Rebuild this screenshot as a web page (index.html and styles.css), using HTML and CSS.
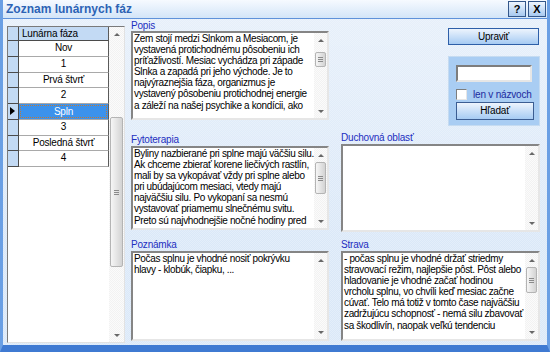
FILE: index.html
```html
<!DOCTYPE html>
<html lang="sk">
<head>
  <meta charset="UTF-8">
  <title>Zoznam lunárnych fáz</title>
  <link rel="stylesheet" href="styles.css">
</head>
<body>
  <div class="window">
    <div class="titlebar">
      <span class="title">Zoznam lunárnych fáz</span>
      <div class="title-buttons">
        <span class="tbtn">?</span>
        <span class="tbtn">X</span>
      </div>
    </div>

    <div class="content">
      <!-- grid with phases -->
      <div class="grid">
        <div class="grid-body">
          <div class="grow head"><span class="rh"></span><span class="cell hcell">Lunárna fáza</span></div>
          <div class="grow"><span class="rh"></span><span class="cell">Nov</span></div>
          <div class="grow"><span class="rh"></span><span class="cell">1</span></div>
          <div class="grow"><span class="rh"></span><span class="cell">Prvá štvrť</span></div>
          <div class="grow"><span class="rh"></span><span class="cell">2</span></div>
          <div class="grow current"><span class="rh"></span><span class="cell"><span class="focus">Spln</span></span></div>
          <div class="grow"><span class="rh"></span><span class="cell">3</span></div>
          <div class="grow"><span class="rh"></span><span class="cell">Posledná štvrť</span></div>
          <div class="grow"><span class="rh"></span><span class="cell">4</span></div>
        </div>
        <div class="vscroll wide">
          <span class="sb-btn sb-up"></span>
          <div class="sb-track"><div class="thumb thumb-grid"></div></div>
          <span class="sb-btn sb-down"></span>
        </div>
      </div>

      <div class="col col-mid">
        <div class="label label-top">Popis</div>
        <div class="memo memo-popis">
          <div class="memo-text">Zem stojí medzi Slnkom a Mesiacom, je<br>vystavená protichodnému pôsobeniu ich<br>príťažlivostí. Mesiac vychádza pri západe<br>Slnka a zapadá pri jeho východe. Je to<br>najvýraznejšia fáza, organizmus je<br>vystavený pôsobeniu protichodnej energie<br>a záleží na našej psychike a kondícii, ako</div>
          <div class="vscroll">
            <span class="sb-btn sb-up"></span>
            <div class="sb-track"><div class="thumb thumb-popis"></div></div>
            <span class="sb-btn sb-down"></span>
          </div>
        </div>

        <div class="label label-gap">Fytoterapia</div>
        <div class="memo memo-fyto">
          <div class="memo-text">Byliny nazbierané pri splne majú väčšiu silu.<br>Ak chceme zbierať korene liečivých rastlín,<br>mali by sa vykopávať vždy pri splne alebo<br>pri ubúdajúcom mesiaci, vtedy majú<br>najväčšiu silu. Po vykopaní sa nesmú<br>vystavovať priamemu slnečnému svitu.<br>Preto sú najvhodnejšie nočné hodiny pred</div>
          <div class="vscroll">
            <span class="sb-btn sb-up"></span>
            <div class="sb-track"><div class="thumb thumb-fyto"></div></div>
            <span class="sb-btn sb-down"></span>
          </div>
        </div>

        <div class="label label-gap2">Poznámka</div>
        <div class="memo memo-low">
          <div class="memo-text">Počas splnu je vhodné nosiť pokrývku<br>hlavy - klobúk, čiapku, ...</div>
          <div class="vscroll">
            <span class="sb-btn sb-up"></span>
            <div class="sb-track"></div>
            <span class="sb-btn sb-down"></span>
          </div>
        </div>
      </div>

      <div class="col col-right">
        <div class="tools">
          <div class="btn btn-edit">Upraviť</div>
          <div class="search">
            <div class="input"></div>
            <div class="check-row"><span class="checkbox"></span><span class="check-label">len v názvoch</span></div>
            <div class="btn btn-find">Hľadať</div>
          </div>
        </div>

        <div class="label">Duchovná oblasť</div>
        <div class="memo memo-duch">
          <div class="memo-text"></div>
          <div class="vscroll">
            <span class="sb-btn sb-up"></span>
            <div class="sb-track"></div>
            <span class="sb-btn sb-down"></span>
          </div>
        </div>

        <div class="label label-gap3">Strava</div>
        <div class="memo memo-low">
          <div class="memo-text">- počas splnu je vhodné držať striedmy<br>stravovací režim, najlepšie pôst. Pôst alebo<br>hladovanie je vhodné začať hodinou<br>vrcholu splnu, vo chvíli keď mesiac začne<br>cúvať. Telo má totiž v tomto čase najväčšiu<br>zadržujúcu schopnosť - nemá silu zbavovať<br>sa škodlivín, naopak veľkú tendenciu</div>
          <div class="vscroll">
            <span class="sb-btn sb-up"></span>
            <div class="sb-track"><div class="thumb thumb-strava"></div></div>
            <span class="sb-btn sb-down"></span>
          </div>
        </div>
      </div>
    </div>
  </div>
</body>
</html>
```

FILE: styles.css
```css
body {
  margin: 0;
  font-family: "Liberation Sans", Arial, sans-serif;
  font-size: 10px;
  letter-spacing: -0.2px;
  color: #000;
}
.window {
  width: 550px;
  height: 352px;
  box-sizing: border-box;
  border-left: 3px solid #6a9fe4;
  border-right: 3px solid #6a9fe4;
  border-bottom: 7px solid #3f7ad2;
  display: flex;
  flex-direction: column;
  background-color: #dae8f8;
  background-image: linear-gradient(rgba(255,255,255,0.35), rgba(255,255,255,0) 70%),
    repeating-conic-gradient(rgba(255,255,255,0.28) 0 25%, transparent 0 50%);
  background-size: 100% 100%, 2px 2px;
}

/* title bar */
.titlebar {
  height: 18px;
  border-bottom: 1px solid #5f92da;
  background: linear-gradient(#f6faff, #d3e5f8);
  display: flex;
  align-items: center;
  justify-content: space-between;
}
.title {
  margin-left: 3px;
  font-size: 12px;
  font-weight: bold;
  letter-spacing: 0;
  color: #2c63b5;
}
.title-buttons {
  display: flex;
  gap: 2px;
  margin-right: 1px;
}
.tbtn {
  width: 16px;
  height: 14px;
  border: 1px solid #34578a;
  background: linear-gradient(#eef5fe, #a7c9f0);
  font-size: 11px;
  font-weight: bold;
  line-height: 14px;
  text-align: center;
  letter-spacing: 0;
}

/* layout */
.content {
  flex: 1;
  display: flex;
  padding-left: 4px;
}
.col {
  display: flex;
  flex-direction: column;
}
.col-mid {
  width: 198px;
  margin-left: 6px;
}
.col-right {
  width: 199px;
  margin-left: 12px;
}
.label {
  height: 13px;
  line-height: 13px;
  color: #1d2ec0;
}
.label-top {
  height: 10px;
  padding-top: 2px;
  line-height: 10px;
}
.label-gap {
  margin-top: 13px;
}
.label-gap2 {
  margin-top: 8px;
}
.label-gap3 {
  margin-top: 6px;
}

/* grid */
.grid {
  width: 118px;
  height: 317px;
  margin-top: 7px;
  box-sizing: border-box;
  border: 1px solid;
  border-color: #7a7a7a #e2e2e2 #e2e2e2 #7a7a7a;
  background: #fff;
  display: flex;
}
.grid-body {
  flex: 1;
}
.grow {
  display: flex;
  height: 15.75px;
  box-sizing: border-box;
}
.grow.head {
  height: 14px;
}
.rh {
  width: 10px;
  background: #c3daf4;
  border-right: 1px solid #4b4b4b;
  border-bottom: 1px solid #4b4b4b;
  position: relative;
}
.cell {
  flex: 1;
  border-right: 1px solid #5a5a5a;
  border-bottom: 1px solid #a9a9a9;
  text-align: center;
  line-height: 14px;
  overflow: hidden;
}
.hcell {
  background: #c3daf4;
  text-align: left;
  padding-left: 3px;
  line-height: 13px;
  border-bottom-color: #4b4b4b;
}
.current .rh::after {
  content: "";
  position: absolute;
  left: 2px;
  top: 3px;
  border-top: 4px solid transparent;
  border-bottom: 4px solid transparent;
  border-left: 5px solid #000;
}
.current .cell {
  background: #3c92ec;
  color: #fff;
  padding: 1px;
}
.focus {
  display: block;
  height: 100%;
  box-sizing: border-box;
  border: 1px dotted #c27a35;
  line-height: 11px;
}

/* memos */
.memo {
  box-sizing: border-box;
  border: 2px solid;
  border-color: #858585 #e6e6e6 #e6e6e6 #858585;
  background: #fff;
  display: flex;
}
.memo-popis {
  height: 89px;
}
.memo-fyto {
  height: 84px;
}
.memo-duch {
  height: 88px;
}
.memo-low {
  height: 90px;
}
.memo-text {
  flex: 1;
  padding: 0 1px;
  line-height: 11.1px;
  letter-spacing: -0.35px;
  white-space: nowrap;
  overflow: hidden;
}

/* scrollbars */
.vscroll {
  width: 13px;
  display: flex;
  flex-direction: column;
  background-color: #f2f2f2;
  background-image: repeating-conic-gradient(#fbfbfb 0 25%, transparent 0 50%);
  background-size: 2px 2px;
}
.vscroll.wide {
  width: 15px;
}
.sb-btn {
  height: 14px;
  display: flex;
  align-items: center;
  justify-content: center;
}
.sb-btn::before {
  content: "";
  border-left: 3px solid transparent;
  border-right: 3px solid transparent;
}
.sb-up::before {
  border-bottom: 3px solid #686868;
}
.sb-down::before {
  border-top: 3px solid #686868;
}
.sb-track {
  flex: 1;
}
.thumb {
  margin: 0 1px;
  box-sizing: border-box;
  border: 1px solid #b4b4b4;
  border-radius: 2px;
  background: linear-gradient(to right, #f6f6f6, #d3d3d3);
  display: flex;
  align-items: center;
  justify-content: center;
}
.thumb::before {
  content: "";
  width: 5px;
  height: 5px;
  background: repeating-linear-gradient(#8a8a8a 0 1px, transparent 1px 2px);
}
.thumb-popis {
  margin-top: 5px;
  height: 15px;
}
.thumb-fyto {
  height: 32px;
}
.thumb-strava {
  height: 26px;
}
.thumb-grid {
  margin-top: 76px;
  height: 150px;
}

/* tools */
.tools {
  height: 112px;
  padding-left: 107px;
  box-sizing: border-box;
}
.btn {
  box-sizing: border-box;
  border: 1px solid #2e5fa8;
  background: linear-gradient(#edf4fd, #a6cbf3);
  text-align: center;
}
.btn-edit {
  width: 91px;
  height: 17px;
  margin-top: 9px;
  line-height: 15px;
}
.search {
  width: 92px;
  height: 70px;
  margin-top: 11px;
  box-sizing: border-box;
  border: 1px solid #c5dbf1;
  background: #a9cdf3;
  padding: 8px 0 0 7px;
}
.input {
  width: 76px;
  height: 17px;
  box-sizing: border-box;
  border: 2px solid;
  border-color: #7d7d7d #e6e6e6 #e6e6e6 #7d7d7d;
  background: #fff;
}
.check-row {
  display: flex;
  align-items: center;
  height: 13px;
  margin-top: 6px;
}
.checkbox {
  width: 11px;
  height: 11px;
  box-sizing: border-box;
  border: 1px solid;
  border-color: #7d7d7d #e6e6e6 #e6e6e6 #7d7d7d;
  background: #fff;
}
.check-label {
  margin-left: 6px;
  color: #1c2a9e;
}
.btn-find {
  width: 78px;
  height: 18px;
  margin-top: 1px;
  line-height: 16px;
  border-color: #3b5d92;
}
```
